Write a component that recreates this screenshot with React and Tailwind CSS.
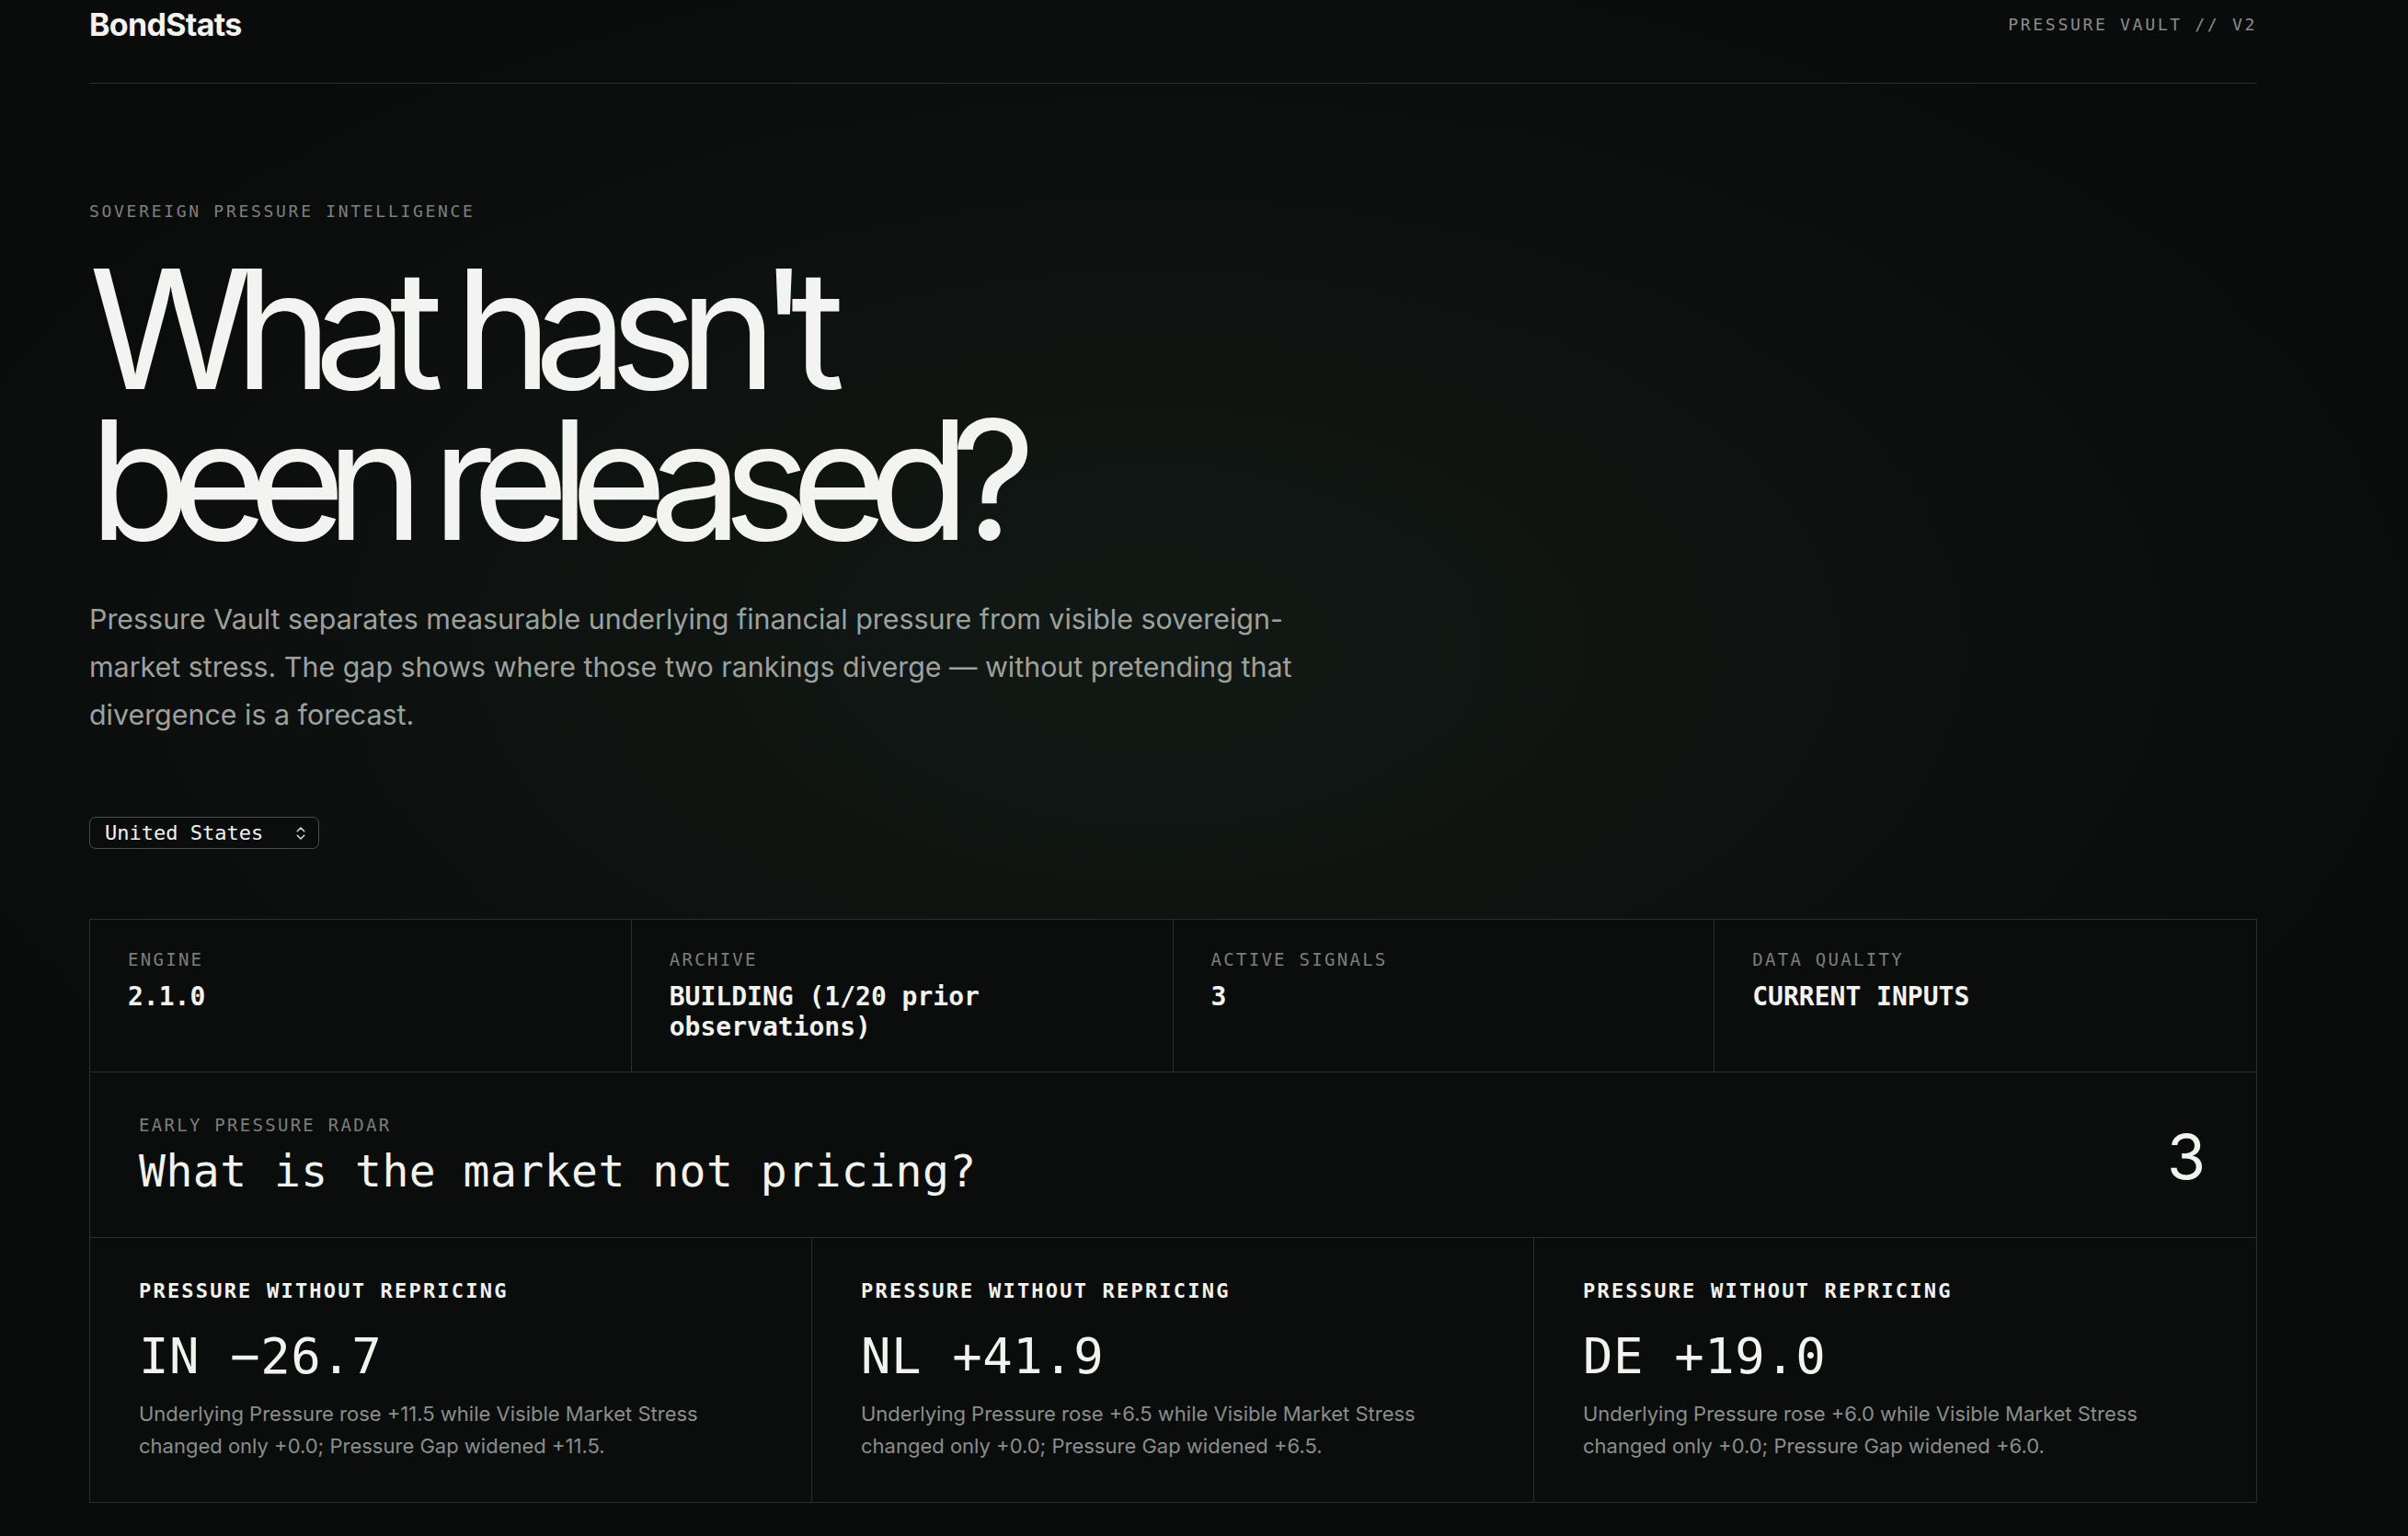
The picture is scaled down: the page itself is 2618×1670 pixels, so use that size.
import React from "react";
import { ChevronsUpDown } from "lucide-react";

const stats = [
  { label: "ENGINE", value: "2.1.0" },
  { label: "ARCHIVE", value: "BUILDING (1/20 prior observations)" },
  { label: "ACTIVE SIGNALS", value: "3" },
  { label: "DATA QUALITY", value: "CURRENT INPUTS" },
];

const signals = [
  {
    title: "PRESSURE WITHOUT REPRICING",
    value: "IN −26.7",
    text: "Underlying Pressure rose +11.5 while Visible Market Stress changed only +0.0; Pressure Gap widened +11.5.",
  },
  {
    title: "PRESSURE WITHOUT REPRICING",
    value: "NL +41.9",
    text: "Underlying Pressure rose +6.5 while Visible Market Stress changed only +0.0; Pressure Gap widened +6.5.",
  },
  {
    title: "PRESSURE WITHOUT REPRICING",
    value: "DE +19.0",
    text: "Underlying Pressure rose +6.0 while Visible Market Stress changed only +0.0; Pressure Gap widened +6.0.",
  },
];

export default function App() {
  return (
    <div className="min-h-screen bg-[#0a0b0b] bg-[radial-gradient(ellipse_70%_60%_at_48%_42%,#121915_0%,#0d110f_45%,#0a0b0b_80%)] text-[#f2f2ef] font-['Inter',sans-serif]">
      <div className="ml-[97px] w-[2357px] pb-[40px]">
        {/* Header */}
        <header className="flex justify-between items-center pt-[8px] pb-[44px] border-b border-[#2c2f2d]">
          <div className="text-[34px] leading-[38px] font-bold tracking-[-0.02em]">BondStats</div>
          <div className="font-['DejaVu_Sans_Mono',monospace] text-[18px] leading-[24px] tracking-[0.15em] text-[#8a8e8b]">
            PRESSURE VAULT // V2
          </div>
        </header>

        {/* Hero */}
        <section className="pt-[127px]">
          <div className="font-['DejaVu_Sans_Mono',monospace] text-[18px] leading-[24px] tracking-[0.15em] text-[#7d817e]">
            SOVEREIGN PRESSURE INTELLIGENCE
          </div>
          <h1 className="mt-[34px] text-[180px] leading-[164px] font-normal tracking-[-0.108em] text-[#f3f3f1]">
            What hasn't
            <br />
            <span className="tracking-[-0.116em]">been released?</span>
          </h1>
          <p className="mt-[43px] max-w-[1370px] text-[30.4px] leading-[52px] text-[#9da19e]">
            Pressure Vault separates measurable underlying financial pressure from visible sovereign-market stress. The
            gap shows where those two rankings diverge — without pretending that divergence is a forecast.
          </p>
          <div className="mt-[85px] inline-flex items-center h-[35px] pl-[16px] pr-[10px] gap-[32px] border border-[#4a4d4b] rounded-[7px] bg-[#0b0c0c]">
            <span className="font-['DejaVu_Sans_Mono',monospace] text-[22px] leading-[26px] text-[#f2f2ef]">
              United States
            </span>
            <ChevronsUpDown className="w-[18px] h-[22px] text-[#d8d8d6]" strokeWidth={2} />
          </div>
        </section>

        {/* Panel */}
        <div className="mt-[76px] border border-[#2c2f2d] bg-[#0b0d0c] font-['DejaVu_Sans_Mono',monospace]">
          <div className="grid grid-cols-4 divide-x divide-[#2c2f2d]">
            {stats.map((s) => (
              <div key={s.label} className="px-[41px] pt-[31px] pb-[32px]">
                <div className="text-[19px] leading-[24px] tracking-[0.12em] text-[#7b7f7c]">{s.label}</div>
                <div className="mt-[12px] text-[28px] leading-[33px] font-bold text-[#f2f2ef]">{s.value}</div>
              </div>
            ))}
          </div>

          <div className="flex items-center justify-between border-t border-[#2c2f2d] pl-[53px] pr-[55px] pt-[45px] pb-[43px]">
            <div>
              <div className="text-[19px] leading-[24px] tracking-[0.12em] text-[#7b7f7c]">EARLY PRESSURE RADAR</div>
              <div className="mt-[9px] text-[48px] leading-[58px] tracking-[0.01em] text-[#f2f2ef]">
                What is the market not pricing?
              </div>
            </div>
            <div className="font-['Inter',sans-serif] text-[68px] leading-[70px] text-[#f2f2ef]">3</div>
          </div>

          <div className="grid grid-cols-3 divide-x divide-[#2c2f2d] border-t border-[#2c2f2d]">
            {signals.map((s) => (
              <div key={s.value} className="px-[53px] pt-[44px] pb-[43px]">
                <div className="text-[22px] leading-[28px] font-bold tracking-[0.1em] text-[#f2f2ef]">{s.title}</div>
                <div className="mt-[24px] text-[54px] leading-[66px] tracking-[0.01em] text-[#f2f2ef]">{s.value}</div>
                <p className="mt-[12px] max-w-[650px] font-['Inter',sans-serif] text-[22px] leading-[35px] text-[#8a8e8b]">
                  {s.text}
                </p>
              </div>
            ))}
          </div>
        </div>
      </div>
    </div>
  );
}
